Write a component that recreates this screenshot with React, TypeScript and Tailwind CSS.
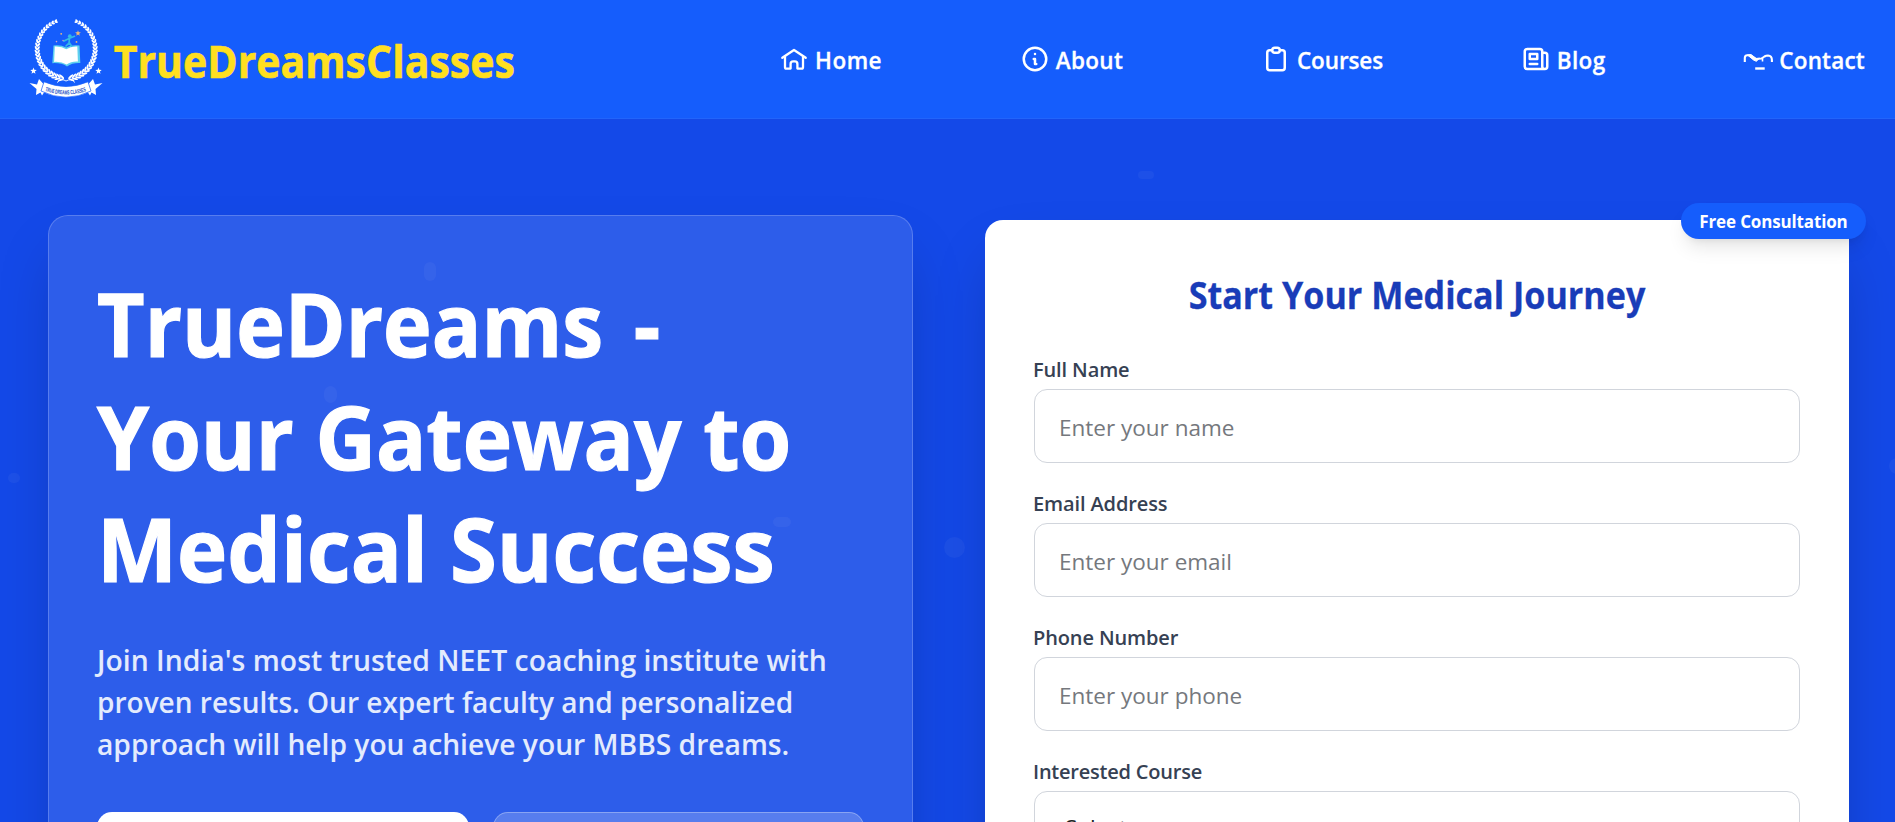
import React from "react";
import type { IconType } from "react-icons";
import {
  HiOutlineClipboard,
  HiOutlineInformationCircle,
  HiOutlineNewspaper,
} from "react-icons/hi";

const range = (n: number) => Array.from({ length: n }, (_, i) => i);

const starPoints = (cx: number, cy: number, r: number) =>
  range(10)
    .map((i) => {
      const a = (Math.PI / 5) * i - Math.PI / 2;
      const d = i % 2 ? r * 0.42 : r;
      return `${(cx + d * Math.cos(a)).toFixed(2)},${(cy + d * Math.sin(a)).toFixed(2)}`;
    })
    .join(" ");

/** Left half of the laurel wreath: pairs of leaves that shrink towards the tip. */
function Laurel() {
  return (
    <g fill="#fff">
      {range(23).map((i) => {
        const a = 1.77 + (i * 2.6) / 22;
        const x = 46.2 + 29 * Math.cos(a);
        const y = 39 + 29.5 * Math.sin(a);
        const dir = (a * 180) / Math.PI + 90;
        const len = 3.2 - i * 0.07;
        const off = 1.8 - i * 0.045;
        return (
          <g key={i} transform={`translate(${x.toFixed(2)} ${y.toFixed(2)}) rotate(${dir.toFixed(1)})`}>
            <ellipse rx={len} ry={1} cy={-off} transform="rotate(-30)" />
            <ellipse rx={len} ry={1} cy={off} transform="rotate(30)" />
          </g>
        );
      })}
    </g>
  );
}

function Logo() {
  return (
    <svg viewBox="0 0 90 95" className="h-[95px] w-[90px] shrink-0" aria-hidden="true">
      <Laurel />
      <g transform="translate(92.4 0) scale(-1 1)">
        <Laurel />
      </g>
      <path d="M37 72.500q5-4.500 9-1.500q5-3 9 1.500" fill="none" stroke="#fff" strokeWidth="0.9" />
      <path d="M33.500 35.500q7-1 12.800 2q5.500-3 13.200-2l.8 17.500q-8-.4-13.300 3.400q-6-3.800-14.700-3.200z" fill="#5fd0ee" />
      <path d="M34.800 36.600q7-.3 11.500 2.600q4.500-2.900 11-2.600l.6 15q-6.600-.4-11.300 3q-5-3.200-12.500-2.700z" fill="#fff" />
      <circle cx="49.800" cy="26.200" r="1.900" fill="#35b9e6" />
      <path d="M44 31l5-2.500 5.500-2.200M49.500 28.500l-.5 4.500-3 3M49.200 32.500l2.300 3.500" stroke="#35b9e6" strokeWidth="1.700" fill="none" strokeLinecap="round" />
      <polygon points={starPoints(58, 23.300, 3)} fill="#f2b877" />
      <circle cx="41.200" cy="23.800" r="0.900" fill="#f2b877" />
      <circle cx="36.500" cy="31.600" r="0.800" fill="#d3a6c8" />
      <circle cx="56.500" cy="31.900" r="0.900" fill="#f2b877" />
      <circle cx="43" cy="30.500" r="0.700" fill="#d3a6c8" />
      <polygon points={starPoints(13.500, 61, 3.400)} fill="#fff" />
      <polygon points={starPoints(78.500, 61, 3.400)} fill="#fff" />
      <path d="M9.500 73l7.500 1.500 2-5.500 8 9-5 7.500-1.500-3-4.500 2.500 .5-6z" fill="#fff" />
      <path d="M82.500 73l-7.500 1.500-2-5.500-8 9 5 7.500 1.500-3 4.500 2.500-.5-6z" fill="#fff" />
      <path d="M24 71.800q22 9.500 44 0l3 9.200q-25 12.500-50 0z" fill="#fff" stroke="#155dfc" strokeWidth="0.700" />
      <path id="ribbon" d="M24 80.600q22 7.600 44 0" fill="none" />
      <text fill="#174bc4" className="font-['Liberation_Sans_Narrow','Liberation_Sans'] font-bold" fontSize="6" textLength="42" lengthAdjust="spacingAndGlyphs">
        <textPath href="#ribbon" startOffset="1">TRUE DREAMS CLASSES</textPath>
      </text>
    </svg>
  );
}

function HomeIcon() {
  return (
    <svg viewBox="0 0 30 30" fill="none" stroke="currentColor" strokeWidth="2.300" strokeLinecap="round" strokeLinejoin="round">
      <path d="M3.300 13.800L15 6l11.700 7.800" />
      <path d="M6 12.500v10.700q0 1.400 1.400 1.400h4.200v-4.600q0-2.600 2.600-2.600h1.600q2.600 0 2.600 2.600v4.600h4.200q1.400 0 1.400-1.400v-10.700" />
    </svg>
  );
}

function ContactIcon() {
  return (
    <svg viewBox="0 0 30 30" fill="none" stroke="currentColor" strokeLinejoin="round">
      <path d="M1.800 18v-4q0-2.800 2.400-2.800h2.800l5 3.800 6.500-.5 3-2q1.600-1 3.500-1 3.900.1 3.900 4.600v1.900" strokeWidth="2.100" />
      <path d="M4.500 11l6 5 2.800 1.300 3.200-3-3 .3-5.500-4z" fill="currentColor" strokeWidth="1" />
      <path d="M19.500 13.500v4" strokeWidth="1.600" />
      <path d="M12.200 24.500h9.500" strokeWidth="2.400" />
    </svg>
  );
}

interface NavEntry {
  label: string;
  Icon: IconType | (() => React.ReactElement);
  text: string;
}

const nav: NavEntry[] = [
  { label: "Home", Icon: HomeIcon, text: "tracking-[0.5px]" },
  { label: "About", Icon: HiOutlineInformationCircle, text: "tracking-[0.35px]" },
  { label: "Courses", Icon: HiOutlineClipboard, text: "tracking-[-0.1px]" },
  { label: "Blog", Icon: HiOutlineNewspaper, text: "tracking-[0.4px]" },
  { label: "Contact", Icon: ContactIcon, text: "tracking-[0.2px]" },
];

function Header() {
  return (
    <header className="relative flex h-[119px] items-start justify-between border-b border-[#2264fb] bg-[#155dfc] pr-[30px] pl-5">
      <div className="flex pt-[10px]">
        <Logo />
        <span className="origin-left scale-x-[0.922] pt-[21px] pl-[4px] text-[44.500px] leading-[60px] font-bold text-[#ffdf20] [-webkit-text-stroke:0.6px_#ffdf20]">
          TrueDreamsClasses
        </span>
      </div>
      <nav className="flex w-[1086px] justify-between pt-[44px]">
        {nav.map(({ label, Icon, text }) => (
          <a key={label} href="#" className="flex h-[34px] gap-[6px] text-[22.5px] leading-[34px] font-semibold text-white">
            <span className="block h-[30px] w-[30px] [&>svg]:h-[30px] [&>svg]:w-[30px]">
              <Icon />
            </span>
            <span className={`[-webkit-text-stroke:0.3px_white] ${text}`}>{label}</span>
          </a>
        ))}
      </nav>
    </header>
  );
}

const particles = [
  "left-[8px] top-[473px] h-[10px] w-[12px]",
  "left-[424px] top-[262px] h-[19px] w-[12px]",
  "left-[324px] top-[386px] h-[17px] w-[13px]",
  "left-[773px] top-[517px] h-[10px] w-[18px]",
  "left-[944px] top-[537px] h-[21px] w-[21px]",
  "left-[1138px] top-[171px] h-[8px] w-[16px]",
  "left-[1889px] top-[458px] h-[16px] w-[16px]",
];

function Intro() {
  return (
    <section className="h-[720px] w-[865px] rounded-[20px] border border-white/20 bg-white/11 px-[48px] pt-[51px] shadow-[0_31px_62px_-15px_rgba(0,0,0,0.25)]">
      <h1 className="text-[88.500px] leading-[112.500px] font-bold text-white [-webkit-text-stroke:1.2px_white]">
        <span className="block origin-left scale-x-[0.930] whitespace-nowrap [word-spacing:10px]">TrueDreams -</span>
        <span className="block origin-left scale-x-[0.944] whitespace-nowrap">Your Gateway to</span>
        <span className="block origin-left scale-x-[0.960] whitespace-nowrap">Medical Success</span>
      </h1>
      <p className="mt-[34px] text-[29.500px] leading-[42px] font-semibold text-[#e3ebfd]">
        <span className="block origin-left scale-x-[0.961] whitespace-nowrap">Join India's most trusted NEET coaching institute with</span>
        <span className="block origin-left scale-x-[0.950] whitespace-nowrap">proven results. Our expert faculty and personalized</span>
        <span className="block origin-left scale-x-[0.956] whitespace-nowrap">approach will help you achieve your MBBS dreams.</span>
      </p>
      <div className="mt-[47px] grid grid-cols-2 gap-[24px]">
        <button className="h-[70px] rounded-[15px] bg-white" aria-label="Get started" />
        <button className="h-[70px] rounded-[15px] border border-white/30 bg-white/20" aria-label="Learn more" />
      </div>
    </section>
  );
}

const fields = [
  { label: "Full Name", placeholder: "Enter your name" },
  { label: "Email Address", placeholder: "Enter your email" },
  { label: "Phone Number", placeholder: "Enter your phone" },
];

function Enquiry() {
  return (
    <section className="relative mt-[5px] h-[800px] w-[864px] rounded-[18px] bg-white px-[49px] pt-[50px] shadow-[0_31px_62px_-15px_rgba(0,0,0,0.25)]">
      <div className="absolute -top-[17px] -right-[17px] flex h-[36px] w-[185px] items-center justify-center rounded-full bg-[#155dfc] pt-px text-[17px] font-bold tracking-[-0.15px] whitespace-nowrap text-white shadow-[0_12px_19px_-4px_rgba(0,0,0,0.1),0_5px_8px_-5px_rgba(0,0,0,0.1)]">
        Free Consultation
      </div>
      <h2 className="scale-x-[0.93] text-center text-[36.700px] leading-[50px] font-bold text-[#193cb8] [-webkit-text-stroke:0.3px_#193cb8]">
        Start Your Medical Journey
      </h2>
      <form className="mt-[34px] flex flex-col gap-[25px]">
        {fields.map((f) => (
          <label key={f.label} className="block">
            <span className="-ml-px block h-[35px] text-[20px] leading-[31px] font-semibold tracking-[-0.12px] text-[#364153]">{f.label}</span>
            <input
              placeholder={f.placeholder}
              className="block h-[74px] w-full rounded-[13px] border border-[#d1d5dc] bg-white px-[24px] pt-[2px] text-[22.500px] placeholder:text-[#75787d]"
            />
          </label>
        ))}
        <div>
          <span className="-ml-px block h-[35px] text-[20px] leading-[31px] font-semibold tracking-[-0.22px] text-[#364153]">Interested Course</span>
          <div className="flex h-[74px] items-center rounded-[13px] border border-[#d1d5dc] bg-white px-[30px] text-[22.500px] text-[#222]">
            Select a course
          </div>
        </div>
      </form>
    </section>
  );
}

export default function App() {
  return (
    <div className="relative h-[822px] overflow-hidden bg-[#1449e8] font-['Open_Sans',sans-serif]">
      <Header />
      {particles.map((p) => (
        <span key={p} className={`absolute rounded-full bg-white/4 ${p}`} />
      ))}
      <main className="relative flex items-start gap-[72px] pt-[96px] pl-[48px]">
        <Intro />
        <Enquiry />
      </main>
    </div>
  );
}
